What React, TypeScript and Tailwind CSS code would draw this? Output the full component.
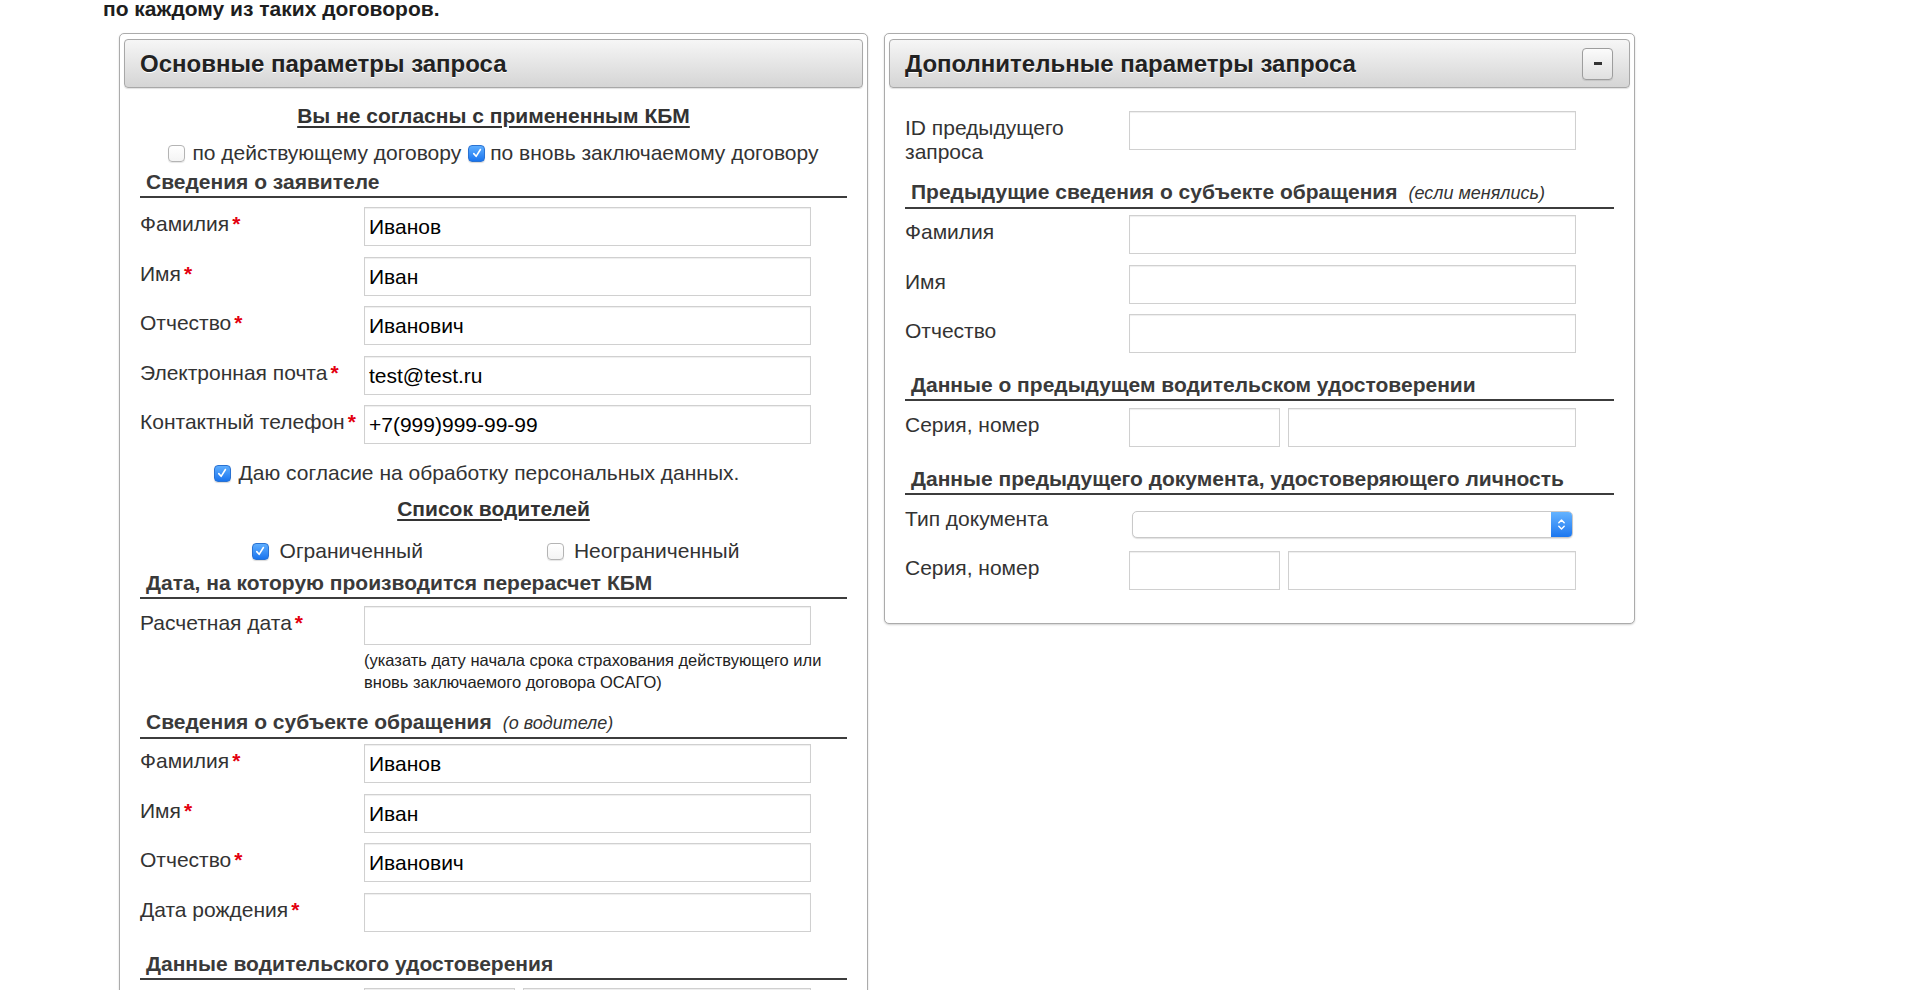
import React from 'react';

// Форма запроса КБМ: основные и дополнительные параметры

function Check({ checked }: { checked?: boolean }) {
    if (checked) {
        return (
            <span className="inline-flex h-[17px] w-[17px] shrink-0 items-center justify-center rounded-[4px] border border-[#2a72d2] bg-linear-to-b from-[#5eaeff] to-[#1874ee] shadow-[0_1px_1px_rgba(0,0,0,0.15)]">
                <svg viewBox="0 0 16 16" className="h-[14px] w-[14px]">
                    <path d="M4.3 8.7 L7 11.8 L11.9 4" fill="none" stroke="#fff" strokeWidth="1.8" strokeLinecap="round" strokeLinejoin="round" />
                </svg>
            </span>
        );
    }
    return <span className="inline-block h-[17px] w-[17px] shrink-0 rounded-[4px] border border-[#b4b4b4] bg-linear-to-b from-white to-[#f4f4f4] shadow-[0_1px_1px_rgba(0,0,0,0.1)]" />;
}

function Input({ value, wide = 'w-[447px]' }: { value?: string, wide?: string }) {
    return (
        <div className={`${wide} h-[39px] shrink-0 border border-[#d0d0d0] bg-white pl-[4px] text-[21px] leading-[37px] text-black shadow-[inset_0_1px_1px_rgba(0,0,0,0.07)]`}>
            {value}
        </div>
    );
}

function Field({ label, value, req, children }: { label: string, value?: string, req?: boolean, children?: React.ReactNode }) {
    return (
        <div className="flex items-start">
            <div className="w-[224px] shrink-0 pt-[5px] text-[21px] leading-[24px] text-[#333]">
                {label}
                {req && <span className="ml-[3px] font-bold text-[#e3000f]">*</span>}
            </div>
            {children ?? <Input value={value} />}
        </div>
    );
}

function PairInputs() {
    return (
        <div className="flex gap-[8px]">
            <Input wide="w-[151px]" />
            <Input wide="w-[288px]" />
        </div>
    );
}

function Section({ title, note, className = '' }: { title: string, note?: string, className?: string }) {
    return (
        <div className={`border-b-2 border-[#3c3c3c] pb-[2px] pl-[6px] text-[21px] font-bold leading-[24px] text-[#3a3a3a] ${className}`}>
            {title}
            {note && <span className="ml-[11px] text-[18px] font-normal italic text-[#333]">{note}</span>}
        </div>
    );
}

function PanelHeader({ title, collapse }: { title: string, collapse?: boolean }) {
    return (
        <div className="flex h-[49px] items-center justify-between rounded-[4px] border border-[#a8a8a8] bg-linear-to-b from-[#f6f6f6] to-[#d5d5d5] pl-[15px] pr-[16px] shadow-[0_1px_1px_rgba(0,0,0,0.12)]">
            <div className="text-[24px] font-bold leading-[28px] text-[#222] [text-shadow:0_1px_0_#fff]">{title}</div>
            {collapse && (
                <div className="flex h-[32px] w-[31px] items-center justify-center rounded-[4px] border border-[#9d9d9d] bg-linear-to-b from-[#fbfbfb] to-[#e0e0e0] shadow-[0_1px_1px_rgba(0,0,0,0.1)]">
                    <span className="block h-[3px] w-[8px] bg-[#333]" />
                </div>
            )}
        </div>
    );
}

function Panel({ title, collapse, width, children }: { title: string, collapse?: boolean, width: string, children: React.ReactNode }) {
    return (
        <div className={`${width} shrink-0 rounded-[5px] border border-[#ababab] bg-white px-[4px] pt-[5px] shadow-[0_1px_2px_rgba(0,0,0,0.18)]`}>
            <PanelHeader title={title} collapse={collapse} />
            <div className="px-[16px]">{children}</div>
        </div>
    );
}

export default function App() {
    return (
        <div className="min-h-screen bg-white pl-[103px] font-['Liberation_Sans',Arial,sans-serif] text-[#222]">
            <div className="text-[21px] font-bold leading-[18px] text-[#1e1e1e]">по каждому из таких договоров.</div>

            <div className="ml-[16px] mt-[15px] flex items-start gap-[16px]">
                {/* Основные параметры */}
                <Panel title="Основные параметры запроса" width="w-[749px]">
                    <div className="mt-[16px] text-center text-[21px] font-bold leading-[24px] text-[#333] underline underline-offset-[3px]">
                        Вы не согласны с примененным КБМ
                    </div>
                    <div className="mt-[13px] flex items-center justify-center text-[21px] leading-[24px] text-[#333]">
                        <Check />
                        <span className="ml-[7px]">по действующему договору</span>
                        <span className="ml-[7px] flex"><Check checked /></span>
                        <span className="ml-[5px]">по вновь заключаемому договору</span>
                    </div>

                    <Section title="Сведения о заявителе" className="mt-[5px]" />
                    <div className="mt-[9px] flex flex-col gap-[10.5px]">
                        <Field label="Фамилия" req value="Иванов" />
                        <Field label="Имя" req value="Иван" />
                        <Field label="Отчество" req value="Иванович" />
                        <Field label="Электронная почта" req value="test@test.ru" />
                        <Field label="Контактный телефон" req value="+7(999)999-99-99" />
                    </div>

                    <div className="mt-[17px] flex items-center justify-center pr-[34px] text-[21px] leading-[24px] text-[#333]">
                        <Check checked />
                        <span className="ml-[8px]">Даю согласие на обработку персональных данных.</span>
                    </div>

                    <div className="mt-[12px] text-center text-[21px] font-bold leading-[24px] text-[#333] underline underline-offset-[3px]">
                        Список водителей
                    </div>
                    <div className="mt-[18px] flex items-center justify-center gap-[124px] pl-[4px] text-[21px] leading-[24px] text-[#333]">
                        <div className="flex items-center gap-[11px]">
                            <Check checked />
                            <span>Ограниченный</span>
                        </div>
                        <div className="flex items-center gap-[10px]">
                            <Check />
                            <span>Неограниченный</span>
                        </div>
                    </div>

                    <Section title="Дата, на которую производится перерасчет КБМ" className="mt-[8px]" />
                    <div className="mt-[7px]">
                        <Field label="Расчетная дата" req />
                    </div>
                    <div className="mt-[4px] pl-[224px] text-[16.5px] leading-[22px] text-[#222]">
                        (указать дату начала срока страхования действующего или<br />
                        вновь заключаемого договора ОСАГО)
                    </div>

                    <Section title="Сведения о субъекте обращения" note="(о водителе)" className="mt-[17px]" />
                    <div className="mt-[5px] flex flex-col gap-[10.5px]">
                        <Field label="Фамилия" req value="Иванов" />
                        <Field label="Имя" req value="Иван" />
                        <Field label="Отчество" req value="Иванович" />
                        <Field label="Дата рождения" req />
                    </div>

                    <Section title="Данные водительского удостоверения" className="mt-[20px]" />
                    <div className="mt-[8px] pb-[28px]">
                        <Field label="Серия, номер" req>
                            <PairInputs />
                        </Field>
                    </div>
                </Panel>

                {/* Дополнительные параметры */}
                <Panel title="Дополнительные параметры запроса" collapse width="w-[751px]">
                    <div className="mt-[23px]">
                        <Field label="ID предыдущего запроса" />
                    </div>

                    <Section title="Предыдущие сведения о субъекте обращения" note="(если менялись)" className="mt-[16px]" />
                    <div className="mt-[6px] flex flex-col gap-[10.5px]">
                        <Field label="Фамилия" />
                        <Field label="Имя" />
                        <Field label="Отчество" />
                    </div>

                    <Section title="Данные о предыдущем водительском удостоверении" className="mt-[20px]" />
                    <div className="mt-[7px]">
                        <Field label="Серия, номер">
                            <PairInputs />
                        </Field>
                    </div>

                    <Section title="Данные предыдущего документа, удостоверяющего личность" className="mt-[20px]" />
                    <div className="mt-[7px] pb-[33px]">
                        <Field label="Тип документа">
                            <div className="ml-[3px] mt-[9px] flex h-[27px] w-[441px] overflow-hidden rounded-[5px] border border-[#c9c9c9] bg-white shadow-[0_1px_1px_rgba(0,0,0,0.12)]">
                                <div className="flex-1" />
                                <div className="flex w-[21px] items-center justify-center bg-linear-to-b from-[#64b3ff] to-[#1a76ef]">
                                    <svg viewBox="0 0 10 18" className="h-[17px] w-[9px]">
                                        <path d="M2 7 L5 4 L8 7 M2 11 L5 14 L8 11" fill="none" stroke="#fff" strokeWidth="1.6" strokeLinecap="round" strokeLinejoin="round" />
                                    </svg>
                                </div>
                            </div>
                        </Field>
                        <div className="mt-[13px]">
                            <Field label="Серия, номер">
                                <PairInputs />
                            </Field>
                        </div>
                    </div>
                </Panel>
            </div>
        </div>
    );
}
